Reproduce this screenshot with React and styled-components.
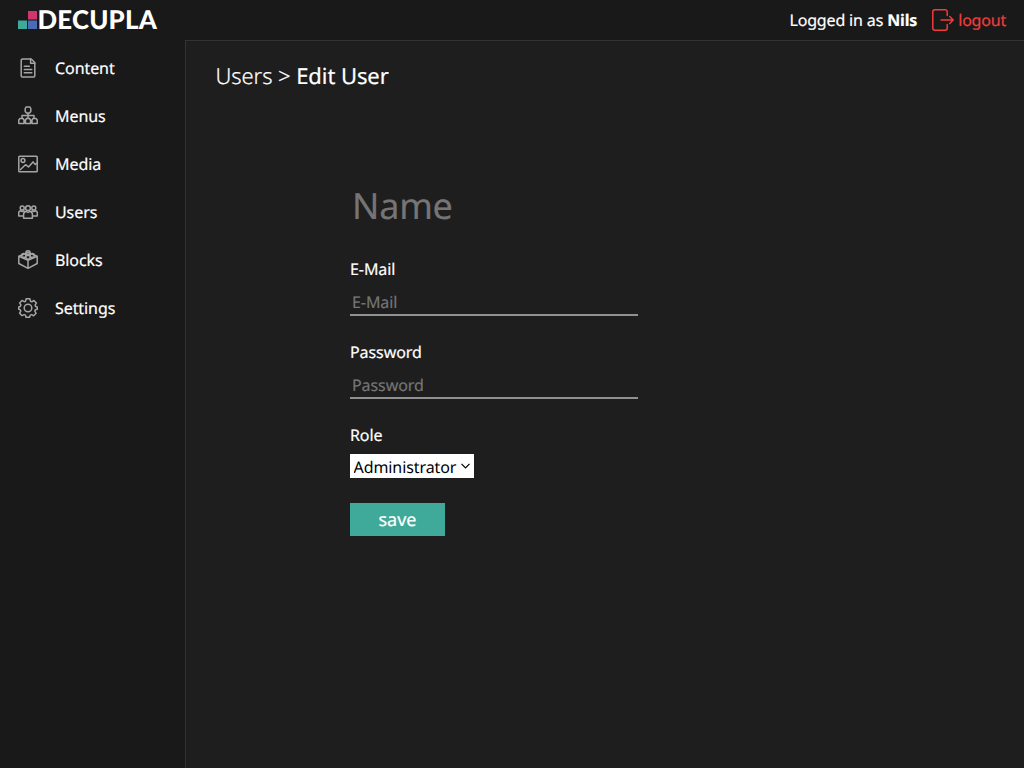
import React from "react";
import styled, { createGlobalStyle } from "styled-components";

const GlobalStyle = createGlobalStyle`
  * { box-sizing: border-box; }
  body {
    margin: 0;
    background: #191919;
    color: #fff;
    font: 16px/22px "Noto Sans", sans-serif;
    letter-spacing: -0.08px;
    text-rendering: geometricPrecision;
    -webkit-text-stroke: 0.2px currentColor;
  }
`;

const Page = styled.div`
  display: grid;
  grid-template: 40px 1fr / 185px 1fr;
  height: 100vh;
  overflow: hidden;
`;

const Header = styled.header`
  grid-column: 1 / -1;
  display: flex;
  align-items: center;
  justify-content: space-between;
  padding: 0 18px;
`;

const Logo = styled.svg`
  display: block;
  width: 141px;
  height: 24px;
  overflow: visible;
  font: 900 25.8px Lato, sans-serif;
  -webkit-text-stroke: 0.4px #fff;
`;

const Account = styled.div`
  display: flex;
  align-items: center;
  white-space: pre;
`;

const UserText = styled.span`
  letter-spacing: -0.15px;
`;

const Logout = styled.a`
  display: flex;
  align-items: center;
  gap: 4px;
  margin-left: 15px;
  color: #f33c3c;
  letter-spacing: -0.2px;
`;

const Sidebar = styled.nav`
  display: flex;
  flex-direction: column;
  padding-top: 4px;
`;

const NavItem = styled.a`
  display: flex;
  align-items: center;
  gap: 17px;
  height: 48px;
  padding-left: 18px;
`;

const Icon = styled.svg`
  flex: none;
  width: ${(p) => p.$size || 20}px;
  height: ${(p) => p.$size || 20}px;
  fill: none;
  stroke: ${(p) => p.$color || "#a5a5a5"};
  stroke-width: ${(p) => p.$weight || 1.5};
  stroke-linecap: round;
  stroke-linejoin: round;
`;

const Main = styled.main`
  border-top: 1px solid #333;
  border-left: 1px solid #333;
  background: #1e1e1e;
  padding: 20px 30px;
`;

const Breadcrumb = styled.h1`
  margin: 0 0 0 -0.5px;
  font-size: 22px;
  line-height: 30px;
  font-weight: 300;
  b { font-weight: 400; }
`;

const Form = styled.form`
  display: flex;
  flex-direction: column;
  align-items: flex-start;
  width: 288px;
  margin: 87px 0 0 134px;
`;

const Input = styled.input`
  width: 100%;
  height: 27px;
  padding: 1px 2px;
  border: 0;
  border-bottom: 2px solid #919191;
  outline: 0;
  background: transparent;
  color: #fff;
  font: inherit;
  letter-spacing: inherit;
  text-rendering: inherit;
  &::placeholder { color: #757575; opacity: 1; }
`;

const NameInput = styled(Input)`
  height: 54px;
  border: 0;
  font-size: 36px;
  line-height: 52px;
  letter-spacing: -0.2px;
`;

const Field = styled.label`
  display: flex;
  flex-direction: column;
  align-items: flex-start;
  gap: ${(p) => p.$gap}px;
  margin-top: ${(p) => p.$top}px;
`;

const FieldInput = styled(Input)`
  width: 288px;
`;

const SelectBox = styled.span`
  display: grid;
  width: 123.5px;
  height: 24px;
  background: #fff;
  > * { grid-area: 1 / 1; }
`;

const Select = styled.select`
  appearance: none;
  width: 100%;
  height: 100%;
  padding: 1px 0 0 3.5px;
  border: 0;
  border-radius: 0;
  background: transparent;
  color: #000;
  font: inherit;
  letter-spacing: inherit;
  text-rendering: inherit;
  -webkit-text-stroke: 0;
`;

const Arrow = styled.svg`
  justify-self: end;
  align-self: center;
  width: 9px;
  height: 6px;
  margin-right: 3.5px;
  fill: none;
  stroke: #000;
  stroke-width: 1.2;
  pointer-events: none;
`;

const Save = styled.button`
  width: 95px;
  height: 33px;
  margin-top: 24.5px;
  padding: 2px 0 0;
  border: 0;
  background: #3fa99a;
  color: #fff;
  font: 18px/30px "Noto Sans", sans-serif;
  text-rendering: inherit;
`;

const items = [
  ["Content", <><path d="M4.8.9h8.4l3.6 3.7v12.9a1.6 1.6 0 0 1-1.6 1.6H4.8a1.6 1.6 0 0 1-1.6-1.6v-15A1.6 1.6 0 0 1 4.8.9Z" /><path d="M12.6 1v4.2h4.2M6.3 8.2h5M6.3 11.5h7.5M6.3 14.8h7.5" /></>],
  ["Menus", <><path d="M8 1h4l.8 1.5v3L11.5 7h-3L7.2 5.5v-3ZM10 7v5.5M4 12V9.5h12V12M2 12.5h3l1 1.5v3.5H.8V14ZM8.5 12.5h3l1 1.5v3.5h-5V14ZM15 12.5h3l1.2 1.5v3.5H14V14Z" /></>],
  ["Media", <><rect x=".8" y="2.2" width="18.4" height="15.6" rx=".8" /><circle cx="5" cy="6.5" r="1.9" /><path d="m2.5 15.5 5-4.8 3 2.2 4.5-5 2.3 2.5 2-1.6" /></>],
  ["Users", <><circle cx="10" cy="6.2" r="2.4" /><circle cx="4.2" cy="6" r="2" /><circle cx="15.8" cy="6" r="2" /><path d="M5.6 16.2v-4c0-1.6.8-2.5 2.3-2.8l2.1 1 2.1-1c1.5.3 2.3 1.2 2.3 2.8v4ZM5 14H.7v-3c0-1.2.7-2 1.8-2.3l1.7.8 1.8-.7M15 14h4.3v-3c0-1.2-.7-2-1.8-2.3l-1.7.8-1.8-.7" /></>],
  ["Blocks", <><path d="M.8 6.2 10 2.5l9.2 3.7v7.3L10 18.3.8 13.5ZM.8 6.2 10 10.3l9.2-4.1M10 10.3v8" /><path d="M8 1.8c0-1.3 4-1.3 4 0v2c0 1.2-4 1.2-4 0ZM3.8 4.5c0-1.2 4-1.2 4 0v2c0 1.2-4 1.2-4 0ZM12.2 4.5c0-1.2 4-1.2 4 0v2c0 1.2-4 1.2-4 0ZM8 6.3c0-1.2 4-1.2 4 0v2c0 1.2-4 1.2-4 0Z" /></>],
  ["Settings", <><path d="M8.1.8h3.8l.5 2.4 1.4.6 2.1-1.3 2.5 2.6-1.3 2 .6 1.5 1.6.4v2.3l-2 .5-.5 1.4 1.3 2.1-2.5 2.5-2-1.2-1.4.5-.6 2.2H8l-.5-2.2-1.4-.5L4 17.6l-2.4-2.4 1.2-2.1-.6-1.4-1.5-.4V8.9L2.3 8.5 2.9 7 1.6 4.9 4 2.4l2.2 1.3 1.4-.5Z" /><circle cx="10" cy="10" r="3.8" /></>],
];

export default function App() {
  return (
    <Page>
      <GlobalStyle />
      <Header>
        <Logo viewBox="0 0 141 24" aria-label="Decupla">
          <path fill="#3fa99a" d="M0 12.5h9V21H0z" />
          <path fill="#d1356c" d="M10 3h9v8.5h-9z" />
          <path fill="#4a6bb5" d="M10 12.5h9V21h-9z" />
          <text x="19.5" y="21" fill="#fff" textLength="119.2" lengthAdjust="spacing">DECUPLA</text>
        </Logo>
        <Account>
          <UserText>Logged in as <b>Nils</b></UserText>
          <Logout>
            <Icon viewBox="0 0 22 22" $size={22} $color="#f33c3c" $weight={1.5}>
              <path d="M15.2 6.5V2.6A1.9 1.9 0 0 0 13.3.8H2.7A1.9 1.9 0 0 0 .8 2.7v16.6a1.9 1.9 0 0 0 1.9 1.9h10.6a1.9 1.9 0 0 0 1.9-1.9v-3.8M9 11h12M17.8 7.5 21.2 11l-3.4 3.5" />
            </Icon>
            logout
          </Logout>
        </Account>
      </Header>
      <Sidebar>
        {items.map(([label, art]) => (
          <NavItem key={label}>
            <Icon viewBox="0 0 20 20">{art}</Icon>
            {label}
          </NavItem>
        ))}
      </Sidebar>
      <Main>
        <Breadcrumb>Users &gt; <b>Edit User</b></Breadcrumb>
        <Form>
          <NameInput placeholder="Name" />
          <Field $top={26} $gap={9}>E-Mail<FieldInput placeholder="E-Mail" /></Field>
          <Field $top={25} $gap={9}>Password<FieldInput type="password" placeholder="Password" /></Field>
          <Field $top={25} $gap={8}>
            Role
            <SelectBox>
              <Select><option>Administrator</option></Select>
              <Arrow viewBox="0 0 9 6"><path d="m.5.8 4 4 4-4" /></Arrow>
            </SelectBox>
          </Field>
          <Save type="button">save</Save>
        </Form>
      </Main>
    </Page>
  );
}
